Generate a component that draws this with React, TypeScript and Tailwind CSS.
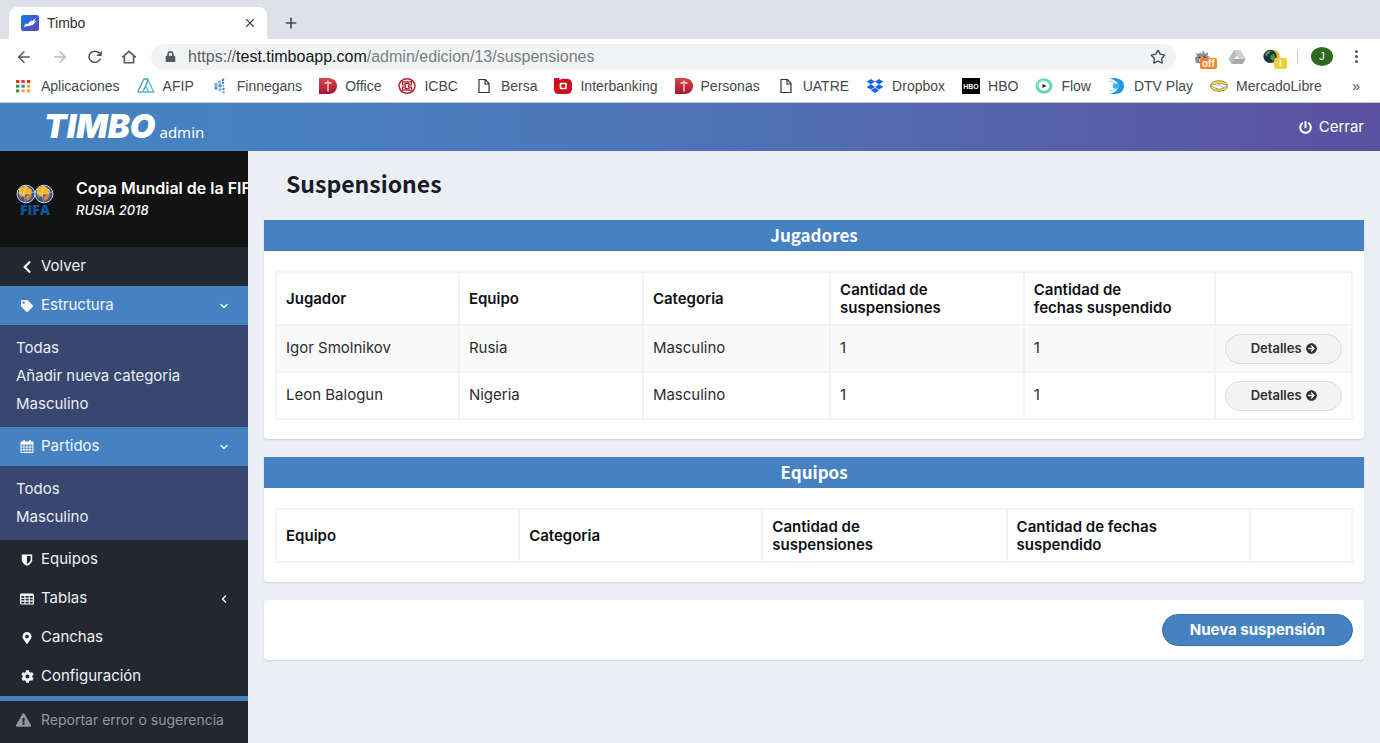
import type { ReactNode } from "react";
import {
  FaArrowCircleRight,
  FaChevronLeft,
  FaCog,
  FaDropbox,
  FaExclamationTriangle,
  FaLock,
  FaMapMarkerAlt,
  FaPowerOff,
  FaTag,
} from "react-icons/fa";
import { ArrowLeft, ArrowRight, ChevronDown, ChevronLeft, Plus, Star, X } from "lucide-react";

/* ---------- Browser icons ---------- */

function TimboFavicon() {
  return (
    <svg viewBox="0 0 18 16" className="h-4 w-[18px]" aria-hidden="true">
      <defs>
        <linearGradient id="fav" x1="0" y1="0" x2="1" y2="1">
          <stop offset="0" stopColor="#1878e0" />
          <stop offset="0.5" stopColor="#3560d4" />
          <stop offset="1" stopColor="#6a3fb8" />
        </linearGradient>
      </defs>
      <rect width="18" height="16" rx="2.5" fill="url(#fav)" />
      <path d="M2.500 11.800 5 8.600l2 .3 3.600-4.400-.4 2.600L14.800 3l-1.800 4 2.800-1.500-4 4.500-5 1.200z" fill="#fff" />
    </svg>
  );
}

function ReloadIcon() {
  return (
    <svg viewBox="0 0 16 14" className="h-3.5 w-4" fill="none" aria-hidden="true">
      <path d="M12.500 3.200A6 5.500 0 1 0 13.500 8.800" stroke="#55585d" strokeWidth="1.600" />
      <path d="M14.800.8v5.200H9.200z" fill="#55585d" />
    </svg>
  );
}

function HomeIcon() {
  return (
    <svg viewBox="0 0 16 14" className="h-3.5 w-4" fill="none" stroke="#55585d" strokeWidth="1.600" aria-hidden="true">
      <path d="M1.200 7.400 8 1.300l6.800 6.100M3.400 6v6.800h9.200V6" />
    </svg>
  );
}

function AppsIcon() {
  const colors = ["#ea3323", "#ea3323", "#ea3323", "#2d9b52", "#3a7cf0", "#f2a93b", "#2d9b52", "#f2a93b", "#f2a93b"];
  return (
    <svg viewBox="0 0 18 14" className="h-3.5 w-[18px]" aria-hidden="true">
      {colors.map((c, i) => (
        <rect key={i} x={1 + (i % 3) * 5.400} y={1 + Math.floor(i / 3) * 4.700} width="3.400" height="3" fill={c} />
      ))}
    </svg>
  );
}

function AfipIcon() {
  return (
    <svg viewBox="0 0 18 16" className="h-4 w-[18px]" fill="none" strokeWidth="1.300" aria-hidden="true">
      <path d="M1 13.500 6.500 1.800Q7 1 8 1h2.300q1 0 .8 1L6.300 13.200q-.4 1-1.300 1H1.500z" stroke="#3e9fc0" />
      <path d="m11 2 5.800 12h-5.300L9 8.200M6.500 14h6" stroke="#57b2d2" />
    </svg>
  );
}

function FinnegansIcon() {
  const dots = [
    [12, 2, 1.200], [8.500, 4, 1.500], [12, 5, 1.100], [5, 6.500, 1.700], [9, 7.700, 1.500], [12.500, 8, 0.900], [5, 10, 1.500], [9, 11.700, 1.500], [12.500, 11, 1.100], [12.500, 14.200, 1.200],
  ];
  return (
    <svg viewBox="0 0 18 16" className="h-4 w-[18px]" aria-hidden="true">
      {dots.map(([x, y, r], i) => (
        <circle key={i} cx={x} cy={y} r={r * 1.150} fill={i % 2 ? "#85b8e2" : "#4b8fd0"} />
      ))}
    </svg>
  );
}

function CrossIcon({ id }: { id: string }) {
  return (
    <svg viewBox="0 0 18 16" className="h-4 w-[18px]" aria-hidden="true">
      <defs>
        <linearGradient id={id} x1="0" y1="0" x2="0" y2="1">
          <stop offset="0" stopColor="#d8474b" />
          <stop offset="1" stopColor="#a81431" />
        </linearGradient>
      </defs>
      <path d="M0 0h10q8 1 8 8t-8 8H0z" fill={`url(#${id})`} />
      <path d="M9 2.500v11M5.500 5.500Q9 3.500 12.500 5.500" stroke="#f6c9cc" strokeWidth="1.500" fill="none" />
    </svg>
  );
}

function IcbcIcon() {
  return (
    <svg viewBox="0 0 18 16" className="h-4 w-[18px]" fill="none" stroke="#b5202d" aria-hidden="true">
      <ellipse cx="9" cy="8" rx="8" ry="7.200" strokeWidth="1.500" />
      <path d="M4.500 3.800h9v3h-3v2.400h3v3h-9v-3h3V6.800h-3zM6.500 5.300h5M6.500 10.700h5" strokeWidth="1.200" />
    </svg>
  );
}

function PageIcon() {
  return (
    <svg viewBox="0 0 18 16" className="h-4 w-[18px]" fill="none" stroke="#333" strokeWidth="1.200" aria-hidden="true">
      <path d="M4 1.500h6.500l3.500 4v9H4zM10 1.500v4.500h4" />
    </svg>
  );
}

function InterbankingIcon() {
  return (
    <svg viewBox="0 0 18 16" className="h-4 w-[18px]" aria-hidden="true">
      <path d="M0 0h5.500v2L8 .8h5q5 .5 5 5.200v5q-.5 5-5 5H5q-5 0-5-5z" fill="#cc101d" />
      <rect x="6.500" y="5.500" width="5.500" height="5" rx=".5" fill="none" stroke="#fff" strokeWidth="1.700" />
    </svg>
  );
}

function HboIcon() {
  return (
    <span aria-hidden="true" className="flex h-4 w-[18px] items-center justify-center bg-black text-[7px] leading-none font-bold text-white">
      HBO
    </span>
  );
}

function FlowIcon() {
  return (
    <svg viewBox="0 0 18 16" className="h-4 w-[18px]" aria-hidden="true">
      <ellipse cx="9" cy="8" rx="7" ry="6.300" fill="#fff" stroke="#62d9b4" strokeWidth="3" />
      <path d="M2.500 8A6.500 5.800 0 0 1 9 2.200" stroke="#b5f0dc" fill="none" />
      <path d="M7.500 6v4l4-2z" fill="#222" />
    </svg>
  );
}

function DtvIcon() {
  return (
    <svg viewBox="0 0 18 16" className="h-4 w-[18px]" aria-hidden="true">
      <path d="M1 0h6.500Q16 1 16 8t-8.500 8H1q6-1.500 8-4.500Q12 8 9 4.500 6.500 1.500 1 0z" fill="#1c9be0" />
      <circle cx="7.500" cy="8" r="2.800" fill="#31b4ee" />
      <path d="M1 3q4 .2 6 2M1 13q4-.2 6-2" stroke="#8ad0f2" fill="none" />
    </svg>
  );
}

function MercadoIcon() {
  return (
    <svg viewBox="0 0 18 16" className="h-4 w-[18px]" aria-hidden="true">
      <ellipse cx="9" cy="8" rx="8.500" ry="5.300" fill="#f5dc38" stroke="#82753c" strokeWidth="0.8" />
      <path d="M1 6.500q4 .5 7-1l3 .2q3 1.300 6 .8-1 3-4 3.500-4 2.500-7.500 0Q2 9.500 1 6.500z" fill="#fff" stroke="#717586" strokeWidth="0.6" />
      <path d="m7 8 2-1.500L13.500 10M6 10l2 1.500" stroke="#717586" strokeWidth="0.6" fill="none" />
    </svg>
  );
}

function FoxExtension() {
  return (
    <svg viewBox="0 0 16 14" className="h-3.5 w-4" aria-hidden="true">
      <path d="M1 13 0 8l2-2-1-3 3 1 1-2 2 2 1-4 2 4 3-2-.5 4 2.500 1-2 1 1 4-3 2z" fill="#8d8d8d" />
      <path d="M4 9q3-3 6 0l-1 4H5z" fill="#e2e2e2" />
      <circle cx="4.500" cy="7.500" r="1" fill="#444" />
      <circle cx="9.500" cy="7.500" r="1" fill="#444" />
    </svg>
  );
}

function DriveExtension() {
  return (
    <svg viewBox="0 0 18 14" className="h-3.5 w-[18px]" aria-hidden="true">
      <path d="M6 0h6l5.500 9-3 5h-11L.5 9z" fill="#bdbdbd" />
      <path d="M6 0h6l5.500 9h-6z" fill="#cfcfcf" />
      <path d="M3.500 14 6.500 9h11l-3 5z" fill="#a9a9a9" />
      <path d="M9 5.200 11.300 9H6.700z" fill="#fff" />
    </svg>
  );
}

function GlobeExtension() {
  return (
    <svg viewBox="0 0 17 15" className="h-[15px] w-[17px]" aria-hidden="true">
      <ellipse cx="9.800" cy="7.500" rx="7" ry="6.800" fill="#e5b62b" />
      <ellipse cx="7" cy="7.300" rx="6.600" ry="6.600" fill="#183247" />
      <path d="M1.800 5q2-4 6-3.500L7 4 4.500 5.500 4 8zM8 6l3-1 1.500 3-3 4L7 9z" fill="#47983f" />
    </svg>
  );
}

/* ---------- Site drawings ---------- */

function FifaLogo() {
  return (
    <div className="flex w-[38px] flex-col items-center">
      <svg viewBox="0 0 38 20" className="h-5 w-[38px]" aria-hidden="true">
        {[10, 28].map((cx) => (
          <g key={cx}>
            <ellipse cx={cx} cy="10" rx="9" ry="8.800" fill="#31588f" stroke="#c9d3df" strokeWidth="1" />
            <path d={`M${cx - 7} 5q5-4.500 9-2l4 3-1 5-5-1-2 3-5-2z`} fill="#efb52c" />
            <path d={`M${cx - 1} 13l4-3 3 1-2 4-3 2zM${cx - 7} 10l3 2-1 3z`} fill="#dc8427" />
            <path d={`M${cx - 8} 8q8 4 16 0M${cx} 2q-4 8 0 16`} stroke="#d9e0e8" strokeWidth="0.5" fill="none" />
          </g>
        ))}
      </svg>
      <span className="font-['Open_Sans',sans-serif] text-sm leading-[11px] font-extrabold text-[#0b559f]">FIFA</span>
    </div>
  );
}

function CalendarGrid() {
  return (
    <svg viewBox="0 0 14 13" className="h-[13px] w-3.5" aria-hidden="true">
      <path d="M1 2h12v10.500H1z" fill="none" stroke="#fff" />
      <path d="M1 2h12v2.500H1z" fill="#fff" />
      <path d="M4 .3v3M10 .3v3" stroke="#fff" strokeWidth="1.800" />
      <path d="M4 4v8M7 4v8M10 4v8M1 7h12M1 9.700h12" stroke="#fff" strokeWidth="0.8" />
    </svg>
  );
}

function HalfShield() {
  return (
    <svg viewBox="0 0 12 12" className="h-3 w-3" aria-hidden="true">
      <path d="M.8.5h10.400v5.700Q10.800 9.500 6 11.800 1.200 9.500.8 6.200z" fill="#fff" />
      <path d="M6 2h3.700v4Q9.500 8.300 6 10.100z" fill="#232731" />
    </svg>
  );
}

function GridTable() {
  return (
    <svg viewBox="0 0 14 12" className="h-3 w-3.5" fill="none" stroke="#fff" aria-hidden="true">
      <rect x=".6" y="1" width="12.800" height="10" rx="1" strokeWidth="1.200" />
      <path d="M1 2h12" strokeWidth="1.800" />
      <path d="M5 2v9M9.200 2v9M1 5.200h12M1 8.100h12" strokeWidth="1.100" />
    </svg>
  );
}

/* ---------- Browser chrome ---------- */

const bookmarks: { label: string; icon: ReactNode }[] = [
  { label: "Aplicaciones", icon: <AppsIcon /> },
  { label: "AFIP", icon: <AfipIcon /> },
  { label: "Finnegans", icon: <FinnegansIcon /> },
  { label: "Office", icon: <CrossIcon id="office" /> },
  { label: "ICBC", icon: <IcbcIcon /> },
  { label: "Bersa", icon: <PageIcon /> },
  { label: "Interbanking", icon: <InterbankingIcon /> },
  { label: "Personas", icon: <CrossIcon id="personas" /> },
  { label: "UATRE", icon: <PageIcon /> },
  { label: "Dropbox", icon: <FaDropbox className="h-4 w-[18px] text-[#0f62f5]" /> },
  { label: "HBO", icon: <HboIcon /> },
  { label: "Flow", icon: <FlowIcon /> },
  { label: "DTV Play", icon: <DtvIcon /> },
  { label: "MercadoLibre", icon: <MercadoIcon /> },
];

function BrowserChrome() {
  return (
    <div className="border-b border-[#c9c9cb] bg-white font-['Liberation_Sans',Arial,sans-serif] text-[#45494e]">
      <div className="flex h-[39px] items-end bg-[#dee1e6] pl-[9px]">
        <div className="flex h-8 w-[258px] items-center rounded-t-lg bg-white pr-2.5 pl-3">
          <TimboFavicon />
          <span className="ml-2 flex-1 text-sm text-[#303236]">Timbo</span>
          <button aria-label="Cerrar pestaña">
            <X className="h-3.5 w-3.5" strokeWidth={2} />
          </button>
        </div>
        <button aria-label="Nueva pestaña" className="flex h-8 items-center pl-4">
          <Plus className="h-4 w-4" strokeWidth={2.500} />
        </button>
      </div>
      <div className="flex h-[35px] items-center pr-[22px] pl-[15px]">
        <div className="flex w-[136px] items-center gap-[18px] text-[#55585d]">
          <button aria-label="Atrás"><ArrowLeft className="h-[18px] w-[18px]" strokeWidth={2} /></button>
          <button aria-label="Adelante" className="text-[#b8babd]"><ArrowRight className="h-[18px] w-[18px]" strokeWidth={2} /></button>
          <button aria-label="Recargar"><ReloadIcon /></button>
          <button aria-label="Inicio"><HomeIcon /></button>
        </div>
        <div className="flex h-[26px] flex-1 items-center rounded-full bg-[#f1f3f4] pr-2.5 pl-3.5">
          <FaLock className="h-[11px] w-[11px] text-[#55585d]" />
          <p className="ml-3 flex-1 text-base leading-5 text-[#7a7e82]">
            <span className="text-[#5b5f63]">https://</span>
            <span className="text-[#151618]">test.timboapp.com</span>/admin/edicion/13/suspensiones
          </p>
          <button aria-label="Favorito"><Star className="h-4 w-4" strokeWidth={2} /></button>
        </div>
        <div className="ml-[19px] flex items-center">
          <div className="relative mr-[17px]">
            <FoxExtension />
            <span className="absolute top-2 left-[5px] rounded-xs bg-[#fa8222] px-0.5 text-[10px] leading-[11px] font-bold text-white">off</span>
          </div>
          <DriveExtension />
          <div className="relative ml-[17px]">
            <GlobeExtension />
            <span className="absolute top-[9px] left-[11px] flex h-[11px] w-[13px] items-center justify-center rounded-xs bg-[#f1cf3c] text-[9px] leading-none font-bold text-white">!</span>
          </div>
          <span className="ml-[17px] h-3.5 w-px bg-[#c6c8ca]" />
          <span className="ml-[13px] flex h-[19px] w-[22px] items-center justify-center rounded-[50%] bg-[#2c6a1e] text-[11px] text-white">J</span>
          <button aria-label="Menú" className="ml-[22px] flex flex-col gap-0.5">
            <span className="h-[3px] w-[3px] rounded-full bg-[#55585d]" />
            <span className="h-[3px] w-[3px] rounded-full bg-[#55585d]" />
            <span className="h-[3px] w-[3px] rounded-full bg-[#55585d]" />
          </button>
        </div>
      </div>
      <nav aria-label="Marcadores" className="flex h-7 items-center pr-5 pb-1 pl-[15px]">
        <ul className="flex flex-1 gap-[17px] whitespace-nowrap">
          {bookmarks.map((b) => (
            <li key={b.label}>
              <a href="#" className="flex items-center gap-2 text-sm leading-4">
                {b.icon}
                {b.label}
              </a>
            </li>
          ))}
        </ul>
        <button className="text-sm leading-4" aria-label="Más marcadores">»</button>
      </nav>
    </div>
  );
}

/* ---------- Sidebar ---------- */

type ItemProps = { icon: ReactNode; label: string; active?: boolean; arrow?: ReactNode };

function MenuItem({ icon, label, active, arrow }: ItemProps) {
  return (
    <a
      href="#"
      className={`flex h-[39px] items-center pr-[18px] pl-5 text-[15px] ${active ? "bg-[#4682c2] text-[#f1f6fb]" : "text-[#f2f2f3]"}`}
    >
      <span className="flex w-3.5 justify-center">{icon}</span>
      <span className="ml-[7px] flex-1">{label}</span>
      {arrow}
    </a>
  );
}

function SubMenu({ items }: { items: string[] }) {
  return (
    <ul className="bg-[#374770] px-4 py-[9px] text-[15px] leading-7 text-[#eceef3]">
      {items.map((item) => (
        <li key={item}><a href="#">{item}</a></li>
      ))}
    </ul>
  );
}

function Sidebar() {
  return (
    <aside className="flex w-[248px] shrink-0 flex-col bg-[#232731]">
      <div className="flex h-24 items-center overflow-hidden bg-[#131313] pl-4 text-white">
        <FifaLogo />
        <div className="ml-[22px] whitespace-nowrap">
          <p className="text-base leading-[22px] font-semibold">Copa Mundial de la FIFA</p>
          <p className="text-[13px] leading-[22px] font-medium italic">RUSIA 2018</p>
        </div>
      </div>
      <nav>
        <MenuItem icon={<FaChevronLeft className="h-3.5 w-3.5" />} label="Volver" />
        <MenuItem active icon={<FaTag className="h-3 w-3" />} label="Estructura" arrow={<ChevronDown className="h-3 w-3" strokeWidth={3} />} />
        <SubMenu items={["Todas", "Añadir nueva categoria", "Masculino"]} />
        <MenuItem active icon={<CalendarGrid />} label="Partidos" arrow={<ChevronDown className="h-3 w-3" strokeWidth={3} />} />
        <SubMenu items={["Todos", "Masculino"]} />
        <MenuItem icon={<HalfShield />} label="Equipos" />
        <MenuItem icon={<GridTable />} label="Tablas" arrow={<ChevronLeft className="h-3 w-3" strokeWidth={3} />} />
        <MenuItem icon={<FaMapMarkerAlt className="h-3 w-3" />} label="Canchas" />
        <MenuItem icon={<FaCog className="h-[13px] w-[13px]" />} label="Configuración" />
      </nav>
      <a href="#" className="flex flex-1 items-start border-t-[5px] border-[#4682c2] pt-[9px] pl-4 text-sm text-[#95979c]">
        <FaExclamationTriangle className="mt-[3px] h-3.5 w-[15px]" />
        <span className="ml-2.5">Reportar error o sugerencia</span>
      </a>
    </aside>
  );
}

/* ---------- Main content ---------- */

function Panel({ title, children }: { title: string; children: ReactNode }) {
  return (
    <section className="rounded-b-sm bg-white shadow-[0_1px_2px_rgba(0,0,0,0.12)]">
      <h2 className="bg-[#4682c2] pb-0.5 text-center font-['Noto_Sans_CJK_JP','Noto_Sans',sans-serif] text-[17px] leading-[29px] font-bold text-white">{title}</h2>
      <div className="px-[11px] pt-5 pb-[19px]">{children}</div>
    </section>
  );
}

const tableClass = "w-full table-fixed border-collapse text-left text-[15px] text-[#2b2d31]";
const headClass = "h-[53px] border-2 border-[#f3f3f3] px-[9px] py-1.5 align-middle leading-[18px] font-semibold text-[#0e1014]";
const cellClass = "h-[47px] border-2 border-[#f3f3f3] px-[9px] py-0";

const players = [
  { name: "Igor Smolnikov", team: "Rusia", category: "Masculino", count: 1, dates: 1 },
  { name: "Leon Balogun", team: "Nigeria", category: "Masculino", count: 1, dates: 1 },
];

function PlayersTable() {
  return (
    <table className={tableClass}>
      <thead>
        <tr>
          <th className={`w-[17%] ${headClass}`}>Jugador</th>
          <th className={`w-[17.1%] ${headClass}`}>Equipo</th>
          <th className={`w-[17.4%] ${headClass}`}>Categoria</th>
          <th className={`w-[18%] ${headClass}`}>Cantidad de<br />suspensiones</th>
          <th className={`w-[17.8%] ${headClass}`}>Cantidad de<br />fechas suspendido</th>
          <th className={`w-[12.7%] ${headClass}`} aria-label="Acciones" />
        </tr>
      </thead>
      <tbody>
        {players.map((p) => (
          <tr key={p.name} className="odd:bg-[#f9f9f9]">
            <td className={cellClass}>{p.name}</td>
            <td className={cellClass}>{p.team}</td>
            <td className={cellClass}>{p.category}</td>
            <td className={cellClass}>{p.count}</td>
            <td className={cellClass}>{p.dates}</td>
            <td className={cellClass}>
              <button className="flex h-[30px] w-full items-center justify-center gap-1 rounded-full border border-[#dcdcdc] bg-[#f3f3f3] text-[13px] font-semibold text-[#303030]">
                Detalles
                <FaArrowCircleRight className="h-[11px] w-[11px]" />
              </button>
            </td>
          </tr>
        ))}
      </tbody>
    </table>
  );
}

function TeamsTable() {
  return (
    <table className={tableClass}>
      <thead>
        <tr>
          <th className={`w-[22.6%] ${headClass}`}>Equipo</th>
          <th className={`w-[22.6%] ${headClass}`}>Categoria</th>
          <th className={`w-[22.7%] ${headClass}`}>Cantidad de<br />suspensiones</th>
          <th className={`w-[22.6%] ${headClass}`}>Cantidad de fechas<br />suspendido</th>
          <th className={`w-[9.5%] ${headClass}`} aria-label="Acciones" />
        </tr>
      </thead>
    </table>
  );
}

export default function App() {
  return (
    <div className="flex min-h-screen flex-col bg-[#ebeef3] font-[Inter,sans-serif]">
      <BrowserChrome />
      <header className="flex h-12 items-center justify-between bg-linear-to-r from-[#4682c2] from-15% via-[#4f70b6] via-55% to-[#5b509f] pr-4 pl-11 text-white">
        <a href="#" className="flex items-baseline">
          <span className="text-[33px] leading-8 font-black italic">TIMBO</span>
          <span className="ml-1 font-['Noto_Sans',sans-serif] text-[15px]">admin</span>
        </a>
        <button className="flex items-center gap-[7px] text-[15px]">
          <FaPowerOff className="h-[13px] w-[13px]" />
          Cerrar
        </button>
      </header>
      <div className="flex flex-1">
        <Sidebar />
        <main className="min-w-0 flex-1 px-4">
          <h1 className="px-[22px] pt-4 pb-[21px] font-['Noto_Sans_CJK_JP','Noto_Sans',sans-serif] text-[23px] leading-8 font-bold text-[#171b28]">Suspensiones</h1>
          <div className="flex flex-col gap-[18px]">
            <Panel title="Jugadores"><PlayersTable /></Panel>
            <Panel title="Equipos"><TeamsTable /></Panel>
            <section className="flex justify-end rounded-sm bg-white px-[11px] py-3.5 shadow-[0_1px_2px_rgba(0,0,0,0.12)]">
              <button className="h-8 w-[191px] rounded-full border border-[#2f72a8] bg-[#4682c2] text-[15px] font-bold text-white">Nueva suspensión</button>
            </section>
          </div>
        </main>
      </div>
    </div>
  );
}
